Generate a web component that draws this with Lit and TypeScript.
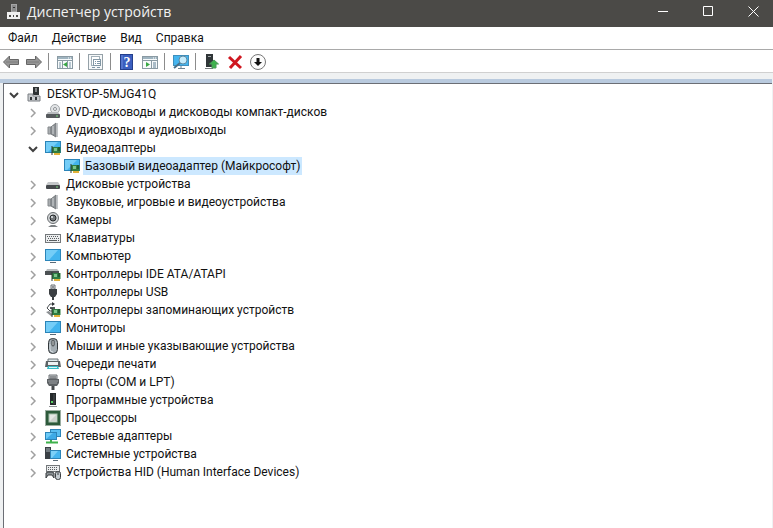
import { LitElement, html, svg, css, nothing, type TemplateResult } from "lit";
import { customElement, state } from "lit/decorators.js";

interface DeviceNode {
  id: string;
  label: string;
  icon: string;
  children?: DeviceNode[];
  expandable?: boolean;
}

const monitor = svg`
  <rect x="0.5" y="1.5" width="15" height="11" fill="#42b4ee" stroke="#2b84b8"/>
  <path d="M1 2h12L4 12H1z" fill="#74cdf7"/>
  <path d="M5 14.5h6" stroke="#5a6b78"/>`;

const board = svg`
  <path d="M7 7h8.500v6H7z" fill="#2f7d43"/>
  <path d="M9 13h6v2H9z" fill="#e0b13a"/>
  <path d="M7 6v9" stroke="#2c3a30"/>
  <rect x="9" y="8" width="3" height="3" fill="#7cc48a"/>
  <path d="M13 8h2M13 10h2" stroke="#16401f"/>`;

const speaker = svg`
  <path d="M3 5h3v7H3z" fill="#a9adb0" stroke="#85898c"/>
  <path d="M6 5l5-4v14l-5-3z" fill="#8b9094" stroke="#777b7e"/>
  <path d="M8 4v8" stroke="#d5d8da"/>
  <path d="M12.500 1v14" stroke="#c3c7ca"/>`;

const panel = svg`
  <rect x="0.500" y="2.500" width="15" height="12" fill="#f7fafb" stroke="#8a9aa3"/>
  <path d="M1 4h14" stroke="#9fb4c0" stroke-width="2"/>
  <path d="M1 6.500h14" stroke="#8a9aa3"/>
  <path d="M11 4h1M13 4h1" stroke="#fff"/>`;

const ICONS: Record<string, TemplateResult> = {
  app: svg`
    <rect x="5.500" y="0.500" width="5" height="7" fill="#8b8b8b" stroke="#a5a5a5"/>
    <rect x="7" y="3" width="2" height="1" fill="#333"/>
    <path d="M1 8h13v7H1z" fill="#efefef"/>
    <path d="M3 11h2v2H3zM7 11h1v2H7zM10 11h2v2h-2z" fill="#4b4a47"/>`,
  host: svg`
    <path d="M7 1h6v8H7z" fill="#2e3234"/>
    <path d="M9 3h2M9 5h2" stroke="#d9dcde"/>
    <path d="M2 8h5v2h7v5H2z" fill="#c9cccf" stroke="#7b7f83"/>
    <path d="M4 11h2v3H4zM9 11h2v3H9z" fill="#33373a"/>`,
  dvd: svg`
    <circle cx="10" cy="5" r="4.500" fill="#e3e5e7" stroke="#a3a7aa"/>
    <circle cx="10" cy="5" r="1.500" fill="#fff" stroke="#8b8f92"/>
    <path d="M3 8h10l2 3H1z" fill="#b9bcbf"/>
    <rect x="1" y="10" width="14" height="4" rx="1" fill="#55595c"/>
    <path d="M11 12h2" stroke="#7ddb7f"/>`,
  audio: speaker,
  video: svg`
    <rect x="0.500" y="1.500" width="15" height="11" fill="#42b4ee" stroke="#2b84b8"/>
    <path d="M1 2h12L3 12H1z" fill="#74cdf7"/>${board}`,
  disk: svg`
    <path d="M3 6h10l2 3H1z" fill="#c4c7c9"/>
    <rect x="1" y="9" width="14" height="4" rx="1" fill="#45494c"/>
    <path d="M11 11h2" stroke="#7ddb7f"/>`,
  camera: svg`
    <circle cx="8" cy="6" r="5.500" fill="#d3d6d8" stroke="#6a6e71"/>
    <circle cx="8" cy="6" r="3" fill="#74787b" stroke="#24282a"/>
    <circle cx="7" cy="5" r="1" fill="#e9eef0"/>
    <path d="M3 15l3-2h4l3 2z" fill="#7c8083"/>`,
  keyboard: svg`
    <rect x="0.500" y="4.500" width="15" height="8" fill="#eceeef" stroke="#74787b"/>
    <path d="M2 6.500h12M3 8.500h11" stroke="#595d60" stroke-dasharray="1 1"/>
    <path d="M2 10.500h1M4 10.500h8M13 10.500h1" stroke="#595d60"/>`,
  monitor,
  ide: svg`
    <path d="M2 3h10l2 2H1z" fill="#b8bcbe"/>
    <path d="M0 5h14v4H0z" fill="#4c5153"/>${board}`,
  usb: svg`
    <path d="M6 1h4v4H6z" fill="#e4e6e8" stroke="#6c7073"/>
    <path d="M4 5h8v5l-2 3H6l-2-3z" fill="#3b3f42"/>
    <path d="M8 12v4" stroke="#3b3f42" stroke-width="2"/>
    <path d="M7 3h2" stroke="#3b3f42"/>`,
  storage: svg`
    <path d="M9 2H5L2 6l3 3h3" fill="none" stroke="#4a4e51" stroke-width="1"/>
    <path d="M7 0l3 2-3 2z" fill="#33373a"/>
    <path d="M5 6h5" stroke="#55595c" stroke-width="2"/>
    <path d="M1 10l3-1 4 4-2 1z" fill="#8b8f92"/>${board}`,
  mouse: svg`
    <rect x="3.500" y="0.500" width="9" height="15" rx="4" fill="#a4adb3" stroke="#33383b"/>
    <path d="M5 6v5q0 3 3 3" fill="none" stroke="#d5dce0"/>
    <rect x="7" y="2" width="2" height="6" rx="1" fill="#f0f2f3" stroke="#33383b"/>`,
  printer: svg`
    <path d="M3 3h10v3H3z" fill="#dfe9ec" stroke="#6b7376"/>
    <path d="M1 5h14l1 6H0z" fill="#5c6366"/>
    <path d="M3 6h10v3H3z" fill="#eef2f3"/>
    <path d="M3 10h10l1 3H2z" fill="#38bcc8"/>
    <path d="M4 11.500h8" stroke="#d9f6f8"/>`,
  port: svg`
    <path d="M4 1h8v4H4z" fill="#cfd2d4" stroke="#6d7174"/>
    <path d="M6 2v3M8 2v3M10 2v3" stroke="#4d5154"/>
    <path d="M2 5h12v4l-2 3H4L2 9z" fill="#5d6164"/>
    <path d="M3 7h10M4 9h8" stroke="#9da1a4"/>
    <path d="M8 12v4" stroke="#45494c" stroke-width="3"/>`,
  tower: svg`
    <path d="M5 1h6v12H5z" fill="#25292b"/>
    <path d="M9 2v10" stroke="#4d5356"/>
    <rect x="6" y="9" width="2" height="2" fill="#58d062"/>
    <path d="M4 14.500h8" stroke="#8e9295"/>`,
  cpu: svg`
    <rect x="1" y="1" width="14" height="14" fill="#2d5a3b"/>
    <rect x="0.500" y="0.500" width="15" height="15" fill="none" stroke="#375b42" stroke-dasharray="1 1"/>
    <rect x="4" y="4" width="8" height="8" fill="#e6e8e6" stroke="#a8c2ae"/>
    <path d="M5 11l6-6v6z" fill="#cdd1ce"/>`,
  network: svg`
    <rect x="5.500" y="1.500" width="10" height="7" fill="#58bdf0" stroke="#2b84b8"/>
    <rect x="0.500" y="4.500" width="11" height="7" fill="#6ccaf7" stroke="#2b84b8"/>
    <path d="M1 11l7-6h3v6z" fill="#3daae6"/>
    <path d="M6 12v2M1 14.500h12" stroke="#3fb24c" stroke-width="2"/>`,
  system: svg`
    <path d="M0 1h6v12H0z" fill="#3a4045"/>
    <path d="M1 3h4M1 5h4" stroke="#a9b4bb"/>
    <rect x="5.500" y="4.500" width="10" height="8" fill="#45b5ef" stroke="#2b84b8"/>
    <path d="M6 5h7l-6 7H6z" fill="#7bd0f8"/>
    <path d="M8 14.500h5" stroke="#5a6b78"/>`,
  hid: svg`
    <rect x="1.500" y="1.500" width="13" height="6" fill="#eceeef" stroke="#74787b"/>
    <path d="M3 3.500h10M3 5.500h10" stroke="#595d60" stroke-dasharray="1 1"/>
    <path d="M1 14V9l2-1h4l2 1v5L7 11H3z" fill="#8b9194" stroke="#3b3f42"/>
    <rect x="10.500" y="7.500" width="5" height="8" rx="2" fill="#c4cbd0" stroke="#3b3f42"/>
    <path d="M13 8v3" stroke="#3b3f42"/>`,
  back: svg`<path d="M0.500 8l6-6v3.500h9v5h-9V14z" fill="#979797" stroke="#666"/><path d="M3 8h12" stroke="#7c7c7c"/>`,
  forward: svg`<path d="M15.500 8l-6-6v3.500h-9v5h9V14z" fill="#979797" stroke="#666"/><path d="M1 8h12" stroke="#7c7c7c"/>`,
  tree: svg`${panel}
    <path d="M5.500 7v7M10.500 7v7" stroke="#8a9aa3"/>
    <path d="M2 9h2M2 11h2M2 13h2M12 9h2M12 11h2M12 13h2" stroke="#7a96a8"/>
    <path d="M10 8v5l-4-2.500z" fill="#39a845"/>`,
  properties: svg`
    <rect x="0.500" y="0.500" width="14" height="15" fill="#f6f8f9" stroke="#95a1a8"/>
    <rect x="3.500" y="2.500" width="8" height="9" fill="#fff" stroke="#a2b0b8"/>
    <rect x="5.500" y="5.500" width="7" height="6" fill="#fff" stroke="#8297a5"/>
    <path d="M7 7.500h1M9 7.500h3M7 9.500h1M9 9.500h3M4 13.500h3M9 13.500h3" stroke="#7d95a6"/>`,
  help: svg`
    <rect x="1.500" y="0.500" width="12" height="15" fill="#3b5fc0" stroke="#243f8c"/>
    <path d="M3 1v14" stroke="#6d8bdc"/>
    <text class="mark" x="8" y="13" text-anchor="middle">?</text>`,
  action: svg`${panel}
    <path d="M9.500 7v7" stroke="#8a9aa3"/>
    <path d="M11 9h3M11 11h3M11 13h3" stroke="#5f7f94"/>
    <path d="M4 8v5l4-2.500z" fill="#39a845"/>`,
  scan: svg`
    <rect x="0.500" y="1.500" width="15" height="10" fill="#45b5ef" stroke="#3f8fbc"/>
    <path d="M5 14.500h7M8 12v2" stroke="#6f8390"/>
    <circle cx="10" cy="6" r="4" fill="#c5ebfb" stroke="#5e8aa2"/>
    <path d="M7 9l-6 5" stroke="#47718b" stroke-width="2"/>`,
  update: svg`
    <path d="M2 0h7v13H2z" fill="#303638"/>
    <path d="M4 2.500h3" stroke="#a2a8aa"/>
    <path d="M1 14.500h8" stroke="#777c7e"/>
    <path d="M10 6l4.500 4H12v4H8v-4H5.500z" fill="#3eb24d" stroke="#4b9a58"/>`,
  remove: svg`<path d="M2 3l12 11M14 2L3 14" stroke="#cf1720" stroke-width="3"/>`,
  disable: svg`
    <circle cx="8" cy="8" r="7.500" fill="#fcfcfc" stroke="#777"/>
    <path d="M6.500 4h3v4H12l-4 4-4-4h2.500z" fill="#111"/>`,
};

const icon = (name: string) =>
  html`<svg class="icon" width="16" height="16" viewBox="0 0 16 16" aria-hidden="true">${ICONS[name]}</svg>`;

const group = (id: string, label: string, iconName: string, children: DeviceNode[] = []): DeviceNode => ({
  id, label, icon: iconName, children, expandable: true,
});

const ROOT: DeviceNode = group("root", "DESKTOP-5MJG41Q", "host", [
  group("dvd", "DVD-дисководы и дисководы компакт-дисков", "dvd"),
  group("audio", "Аудиовходы и аудиовыходы", "audio"),
  group("video", "Видеоадаптеры", "video", [
    { id: "basic", label: "Базовый видеоадаптер (Майкрософт)", icon: "video" },
  ]),
  group("disk", "Дисковые устройства", "disk"),
  group("sound", "Звуковые, игровые и видеоустройства", "audio"),
  group("camera", "Камеры", "camera"),
  group("keyboard", "Клавиатуры", "keyboard"),
  group("computer", "Компьютер", "monitor"),
  group("ide", "Контроллеры IDE ATA/ATAPI", "ide"),
  group("usb", "Контроллеры USB", "usb"),
  group("storage", "Контроллеры запоминающих устройств", "storage"),
  group("monitor", "Мониторы", "monitor"),
  group("mouse", "Мыши и иные указывающие устройства", "mouse"),
  group("printer", "Очереди печати", "printer"),
  group("port", "Порты (COM и LPT)", "port"),
  group("software", "Программные устройства", "tower"),
  group("cpu", "Процессоры", "cpu"),
  group("network", "Сетевые адаптеры", "network"),
  group("system", "Системные устройства", "system"),
  group("hid", "Устройства HID (Human Interface Devices)", "hid"),
]);

const TOOLS: [string, string][][] = [
  [["back", "Назад"], ["forward", "Вперед"]],
  [["tree", "Дерево консоли"]],
  [["properties", "Свойства"]],
  [["help", "Справка"], ["action", "Панель действий"]],
  [["scan", "Обновить конфигурацию"]],
  [["update", "Обновить драйвер"], ["remove", "Удалить устройство"], ["disable", "Отключить устройство"]],
];

@customElement("app-root")
export class AppRoot extends LitElement {
  @state() private open = new Set(["root", "video"]);
  @state() private selected = "basic";

  static styles = css`
    :host {
      display: flex;
      flex-direction: column;
      min-height: 100vh;
      box-sizing: border-box;
      background: #fff;
      color: #111;
      font: 12px/18px Roboto, "Open Sans", sans-serif;
    }
    button {
      margin: 0;
      padding: 0;
      border: 0;
      background: none;
      color: inherit;
      font: inherit;
    }
    .icon { display: block; flex: none; overflow: visible; }
    .mark { font: bold 14px "Liberation Serif", serif; fill: #fff; }
    .titlebar {
      display: flex;
      align-items: center;
      height: 27px;
      padding-left: 6px;
      background: #4b4a47;
      color: #f2f2f2;
    }
    .title {
      flex: 1;
      margin: 0 0 3px 5px;
      font: 14px/18px "Open Sans", "Noto Sans", sans-serif;
    }
    .titlebar .icon { margin-bottom: 3px; }
    .window-buttons { display: flex; gap: 5px; }
    .window-button {
      display: grid;
      place-items: center;
      width: 40px;
      height: 27px;
      padding-bottom: 4px;
    }
    .menubar {
      display: flex;
      height: 22px;
      padding-left: 1px;
      border-bottom: 1px solid #a9a9a9;
    }
    .menu-item { padding: 0 7px; }
    .toolbar {
      display: flex;
      align-items: center;
      height: 22px;
      border-bottom: 1px solid #d0d0d0;
    }
    .tool {
      display: grid;
      place-items: center;
      width: 23px;
      height: 22px;
      padding: 2px 1px 0 0;
    }
    .separator {
      width: 1px;
      height: 17px;
      margin: 0 5px 0 2px;
      background: #8c8c8c;
    }
    .workspace {
      flex: 1;
      display: flex;
      flex-direction: column;
      padding: 6px 1px 0 0;
      background: #eff1f2;
    }
    .band { height: 4px; background: #b9cade; }
    .pane {
      flex: 1;
      margin-left: 3px;
      border: solid #6b6e75;
      border-width: 1px 0 0 1px;
      background: #fff;
    }
    ul { margin: 0; padding: 0; list-style: none; }
    ul ul { padding-left: 19px; }
    .row { display: flex; align-items: center; height: 18px; }
    .root { padding: 1px 0 0 1px; }
    .toggle {
      display: grid;
      place-items: center;
      width: 18px;
      height: 18px;
      margin-right: 3px;
      padding-top: 2px;
    }
    .label {
      margin-left: 3px;
      padding: 0 2px;
      white-space: nowrap;
    }
    .label.selected { background: #cce8ff; }
  `;

  private toggle(id: string) {
    const next = new Set(this.open);
    next.has(id) ? next.delete(id) : next.add(id);
    this.open = next;
  }

  private renderNode(node: DeviceNode): TemplateResult {
    const open = this.open.has(node.id);
    return html`
      <li role="treeitem" aria-expanded=${node.expandable ? String(open) : nothing}
        aria-selected=${String(this.selected === node.id)}>
        <div class="row">
          <button class="toggle" aria-label=${node.label} ?disabled=${!node.expandable}
            @click=${() => this.toggle(node.id)}>
            ${node.expandable
              ? html`<svg width="10" height="10" viewBox="0 0 10 10" fill="none" aria-hidden="true">
                  ${open
                    ? svg`<path d="M1 3l4 4 4-4" stroke="#404040" stroke-width="2"/>`
                    : svg`<path d="M3 1l4 4-4 4" stroke="#a0a0a0" stroke-width="1.500"/>`}
                </svg>`
              : nothing}
          </button>
          ${icon(node.icon)}
          <button class="label ${this.selected === node.id ? "selected" : ""}"
            @click=${() => (this.selected = node.id)}>${node.label}</button>
        </div>
        ${open && node.children?.length
          ? html`<ul role="group">${node.children.map((child) => this.renderNode(child))}</ul>`
          : nothing}
      </li>`;
  }

  render() {
    return html`
      <header class="titlebar">
        ${icon("app")}
        <h1 class="title">Диспетчер устройств</h1>
        <div class="window-buttons">
          <button class="window-button" aria-label="Свернуть">
            <svg width="11" height="11" viewBox="0 0 11 11"><path d="M0 5.500h10" stroke="#fff"/></svg>
          </button>
          <button class="window-button" aria-label="Развернуть">
            <svg width="11" height="11" viewBox="0 0 11 11"><path d="M0.500 0.500h9v9h-9z" fill="none" stroke="#fff"/></svg>
          </button>
          <button class="window-button" aria-label="Закрыть">
            <svg width="11" height="11" viewBox="0 0 11 11"><path d="M0.500 0.500l10 10M10.500 0.500l-10 10" stroke="#fff"/></svg>
          </button>
        </div>
      </header>
      <nav class="menubar">
        ${["Файл", "Действие", "Вид", "Справка"].map((m) => html`<button class="menu-item">${m}</button>`)}
      </nav>
      <div class="toolbar" role="toolbar">
        ${TOOLS.map((tools, i) => html`
          ${i ? html`<span class="separator"></span>` : nothing}
          ${tools.map(([name, label]) => html`<button class="tool" aria-label=${label}>${icon(name)}</button>`)}`)}
      </div>
      <main class="workspace">
        <div class="band"></div>
        <div class="pane"><ul class="root" role="tree">${this.renderNode(ROOT)}</ul></div>
      </main>`;
  }
}
